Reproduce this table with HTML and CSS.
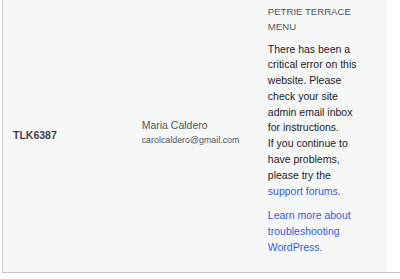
FILE: index.html
```html
<!DOCTYPE html>
<html lang="en">
<head>
<meta charset="utf-8">
<title>Orders</title>
<link rel="stylesheet" href="styles.css">
</head>
<body>
<div class="wrap">
  <table class="list">
    <colgroup>
      <col class="c-id">
      <col class="c-cust">
      <col class="c-msg">
      <col class="c-rest">
    </colgroup>
    <tbody>
      <tr class="row">
        <td class="cell cell-id"><strong class="order-id">TLK6387</strong></td>
        <td class="cell cell-cust">
          <span class="cust-name">Maria Caldero</span>
          <span class="cust-email">carolcaldero@gmail.com</span>
        </td>
        <td class="cell cell-msg">
          <div class="menu-name">PETRIE TERRACE MENU</div>
          <p class="err">There has been a critical error on this website. Please check your site admin email inbox for instructions.<br>If you continue to have problems, please try the <a class="lnk" href="#">support forums</a>.</p>
          <p class="err err-last"><a class="lnk" href="#">Learn more about troubleshooting WordPress.</a></p>
        </td>
        <td class="cell cell-rest"></td>
      </tr>
    </tbody>
  </table>
</div>
</body>
</html>
```

FILE: styles.css
```css
html, body {
  margin: 0;
  padding: 0;
  background: #ffffff;
  overflow: hidden;
}

body {
  font-family: "Liberation Sans", Arial, sans-serif;
  font-size: 10.5px;
  color: #1d2327;
}

.wrap {
  padding-left: 2px;
}

.list {
  border-collapse: collapse;
  table-layout: fixed;
  width: 398px;
  border-left: 1px solid #d5d6d8;
  border-bottom: 1px solid #c3c4c7;
}

.c-id { width: 129px; }
.c-cust { width: 126px; }
.c-msg { width: 129px; }
.c-rest { width: 13px; }

.row {
  background: #f6f7f7;
}

.cell {
  vertical-align: middle;
  padding: 0 10px;
}

.order-id {
  font-weight: 700;
  color: #3c434a;
  line-height: 15px;
}

.cell-cust {
  padding-bottom: 6px;
}

.cust-name {
  display: block;
  font-size: 10.5px;
  line-height: 15px;
  color: #50575e;
}

.cust-email {
  display: block;
  font-size: 8.9px;
  line-height: 15.3px;
  color: #50575e;
}

.cell-msg {
  padding: 4px 29px 16px 10px;
  vertical-align: top;
}

.menu-name {
  font-size: 9.6px;
  line-height: 15px;
  color: #50575e;
  margin-bottom: 7.5px;
}

.err {
  margin: 0 0 8.7px;
  line-height: 15.8px;
  color: #1d2327;
}

.err-last {
  margin-bottom: 0;
}

.lnk {
  color: #3858e9;
  text-decoration: none;
}

.cell-rest {
  background: #ffffff;
  padding: 0;
}
```
